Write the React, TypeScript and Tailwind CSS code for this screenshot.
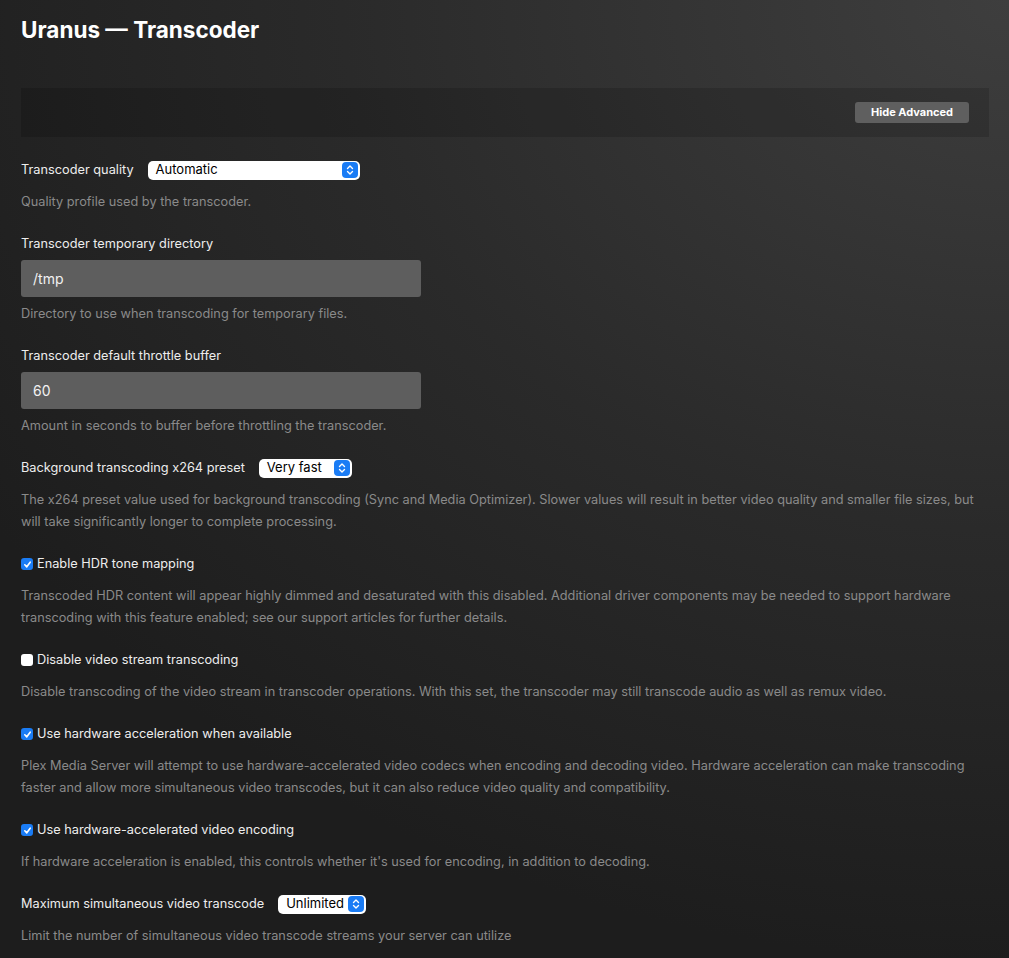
import React from "react";

const font = "font-['Inter','Open_Sans','Liberation_Sans',sans-serif]";

function Stepper() {
  return (
    <span className="flex h-[16px] w-[16px] items-center justify-center rounded-[4px] bg-[#1a7cf5]">
      <svg width="8" height="12" viewBox="0 0 8 12" fill="none" stroke="white" strokeWidth="1.4" strokeLinecap="round" strokeLinejoin="round">
        <path d="M1.5 4.5 L4 2 L6.5 4.5" />
        <path d="M1.5 7.5 L4 10 L6.5 7.5" />
      </svg>
    </span>
  );
}

function Select({ value, width }: { value: string; width: string }) {
  return (
    <div className={`flex h-[19px] items-center justify-between rounded-[5px] bg-white pl-[8px] pr-[2px] text-[13px] text-black ${width}`}>
      <span>{value}</span>
      <Stepper />
    </div>
  );
}

function Checkbox({ checked }: { checked: boolean }) {
  return checked ? (
    <span className="mr-[4px] flex h-[12px] w-[12px] items-center justify-center rounded-[3px] bg-[#1a7cf5]">
      <svg width="9" height="9" viewBox="0 0 10 10" fill="none" stroke="white" strokeWidth="1.8" strokeLinecap="round" strokeLinejoin="round">
        <path d="M2 5.3 L4.2 7.6 L8 2.4" />
      </svg>
    </span>
  ) : (
    <span className="mr-[4px] h-[12px] w-[12px] rounded-[3px] bg-white" />
  );
}

function Help({ children }: { children: React.ReactNode }) {
  return <p className="mt-[11px] text-[12.75px] leading-[22px] text-[#8a8a8a]">{children}</p>;
}

function SelectSetting({ label, value, width, help }: { label: string; value: string; width: string; help: React.ReactNode }) {
  return (
    <div>
      <div className="flex h-5 items-center gap-[14px] text-[12.75px] text-[#ededed]">
        <span>{label}</span>
        <Select value={value} width={width} />
      </div>
      <Help>{help}</Help>
    </div>
  );
}

function InputSetting({ label, value, help }: { label: string; value: string; help: string }) {
  return (
    <div>
      <div className="flex h-5 items-center text-[12.75px] text-[#ededed]">{label}</div>
      <div className="mt-[6px] flex h-[37px] w-[400px] items-center rounded-[3px] bg-[#5e5e5e] px-[12px] text-[14px] text-[#f2f2f2]">
        {value}
      </div>
      <p className="mt-[6px] text-[12.75px] leading-[22px] text-[#8a8a8a]">{help}</p>
    </div>
  );
}

function CheckSetting({ label, checked, help }: { label: string; checked: boolean; help: React.ReactNode }) {
  return (
    <div>
      <div className="flex h-5 items-center text-[12.75px] text-[#ededed]">
        <Checkbox checked={checked} />
        <span>{label}</span>
      </div>
      <Help>{help}</Help>
    </div>
  );
}

export default function App() {
  return (
    <div className={`min-h-[958px] bg-[radial-gradient(ellipse_120%_100%_at_100%_0%,#3e3e3e_0%,#2a2a2a_55%,#1d1d1d_100%)] px-[21px] pb-4 pt-[14px] ${font}`}>
      <h1 className="text-[22.5px] font-bold leading-[32px] text-white">Uranus — Transcoder</h1>

      <div className="mt-[42px] flex h-[49px] w-[968px] items-center justify-end bg-[#000000]/15 pr-[20px]">
        <button className="h-[21px] rounded-[3px] bg-[#5f5f5f] px-[16px] text-[11px] font-bold text-white">
          Hide Advanced
        </button>
      </div>

      <div className="mt-[23px] flex flex-col gap-[21px]">
        <SelectSetting label="Transcoder quality" value="Automatic" width="w-[212px]" help="Quality profile used by the transcoder." />
        <InputSetting label="Transcoder temporary directory" value="/tmp" help="Directory to use when transcoding for temporary files." />
        <InputSetting label="Transcoder default throttle buffer" value="60" help="Amount in seconds to buffer before throttling the transcoder." />
        <SelectSetting
          label="Background transcoding x264 preset"
          value="Very fast"
          width="w-[93px]"
          help="The x264 preset value used for background transcoding (Sync and Media Optimizer). Slower values will result in better video quality and smaller file sizes, but will take significantly longer to complete processing."
        />
        <CheckSetting
          label="Enable HDR tone mapping"
          checked
          help="Transcoded HDR content will appear highly dimmed and desaturated with this disabled. Additional driver components may be needed to support hardware transcoding with this feature enabled; see our support articles for further details."
        />
        <CheckSetting
          label="Disable video stream transcoding"
          checked={false}
          help="Disable transcoding of the video stream in transcoder operations. With this set, the transcoder may still transcode audio as well as remux video."
        />
        <CheckSetting
          label="Use hardware acceleration when available"
          checked
          help="Plex Media Server will attempt to use hardware-accelerated video codecs when encoding and decoding video. Hardware acceleration can make transcoding faster and allow more simultaneous video transcodes, but it can also reduce video quality and compatibility."
        />
        <CheckSetting
          label="Use hardware-accelerated video encoding"
          checked
          help="If hardware acceleration is enabled, this controls whether it's used for encoding, in addition to decoding."
        />
        <SelectSetting
          label="Maximum simultaneous video transcode"
          value="Unlimited"
          width="w-[88px]"
          help="Limit the number of simultaneous video transcode streams your server can utilize"
        />
      </div>
    </div>
  );
}
